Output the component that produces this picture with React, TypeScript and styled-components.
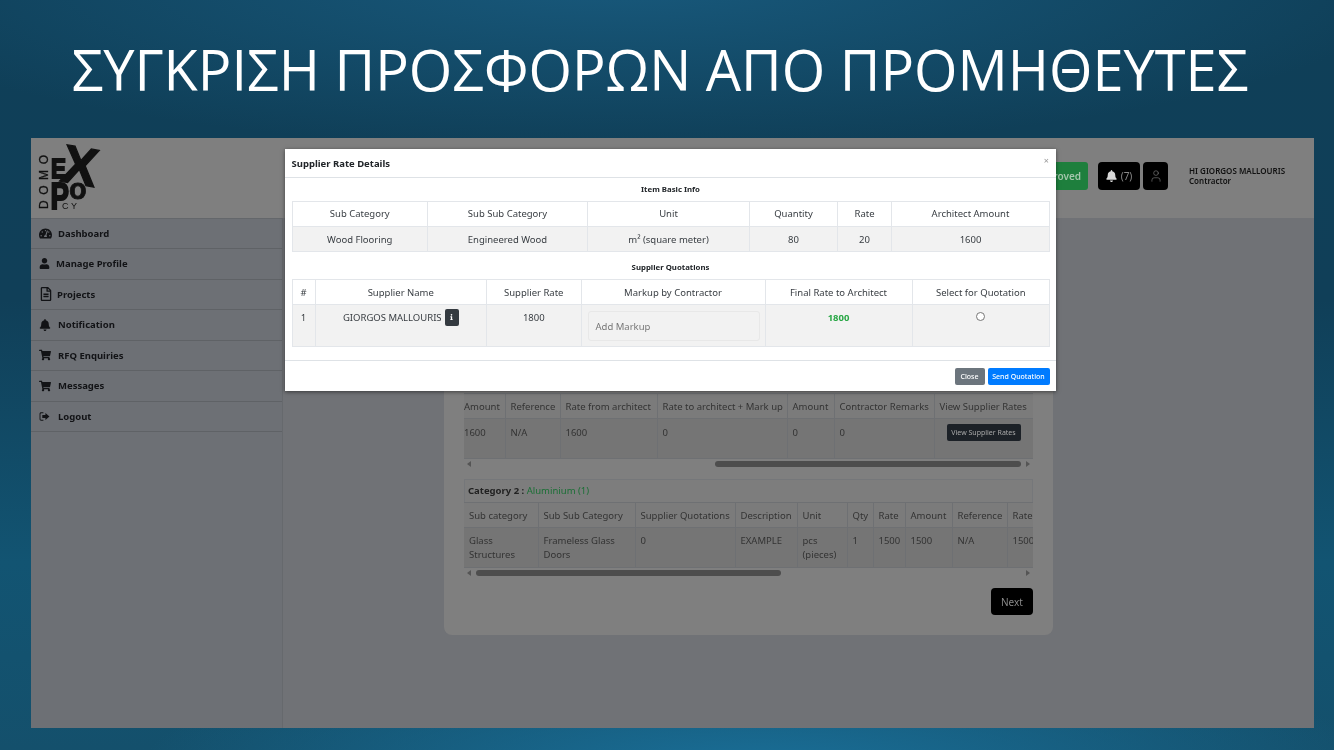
import React from "react";
import styled, { createGlobalStyle } from "styled-components";
import { FaTachometerAlt, FaUser, FaRegFileAlt, FaBell, FaShoppingCart, FaInfo } from "react-icons/fa";
import { User } from "lucide-react";

const Global = createGlobalStyle`
  html, body { margin: 0; padding: 0; width: 1334px; height: 750px; overflow: hidden; }
  body { font-family: "Noto Sans", "Open Sans", sans-serif; }
  * { box-sizing: border-box; }
`;

const Slide = styled.div`
  width: 1334px; height: 750px; overflow: hidden; display: flex; flex-direction: column;
  background:
    radial-gradient(ellipse 620px 130px at 760px 770px, #1a6f98 0%, rgba(26,111,152,0) 100%),
    radial-gradient(ellipse 800px 170px at 620px -20px, #18597c 0%, rgba(24,89,124,0) 100%),
    linear-gradient(180deg, #0f3f58 0%, #103f58 40%, #125472 75%, #14506c 100%);
`;
const TitleBar = styled.div`
  height: 138px; flex: none; display: flex; justify-content: center; padding: 31px 14px 0 0;
`;
const Title = styled.h1`
  margin: 0; color: #fff; font-weight: 400; font-size: 55.9px; line-height: 76px; white-space: nowrap;
  font-family: "Open Sans", "Noto Sans", sans-serif;
`;
const Window = styled.div`
  position: relative; width: 1283px; height: 590px; margin-left: 31px; overflow: hidden;
  display: flex; flex-direction: column; background: #707276; filter: blur(0.3px);
`;
const Header = styled.header`
  height: 80px; flex: none; background: #7f7f7f; display: flex; align-items: center; padding: 5px 0 0 5px;
`;
const LogoBox = styled.div` width: 70px; height: 72px; `;
const HeaderRight = styled.div`
  margin-left: auto; display: flex; align-items: center; padding-right: 8px; margin-top: -9px;
`;
const Approved = styled.div`
  width: 80px; height: 28px; background: #1e7f3d; border-radius: 3px; color: #a4c6ac; font-size: 10px;
  font-weight: 600; display: flex; align-items: center; justify-content: flex-end; padding-right: 7px;
`;
const DarkBtn = styled.div<{ $w: number; $ml: number }>`
  width: ${p => p.$w}px; margin-left: ${p => p.$ml}px; height: 28px; border-radius: 4px; background: #000; color: #8a8a8a;
  font-size: 10px; display: flex; align-items: center; justify-content: center; gap: 4px;
  & > svg.bell { color: #d8d8d8; width: 11px; height: 12px; }
`;
const Greeting = styled.div`
  margin-left: 21px; width: 117px; font-size: 8px; line-height: 10px; font-weight: 600; color: #111;
`;
const Upper = styled.div` text-transform: uppercase; white-space: nowrap; `;
const Body = styled.div` flex: 1; display: flex; min-height: 0; `;
const Sidebar = styled.nav`
  width: 252px; flex: none; background: #6d7075; border-right: 1px solid #66696d; padding-top: 0.5px; box-shadow: inset 0 1px 0 #64676b;
`;
const NavItem = styled.div<{ $gap: number; $size: number }>`
  height: 30.5px; display: flex; align-items: center; padding-left: 8px; gap: ${p => p.$gap}px;
  border-bottom: 1px solid #5f6266; font-size: 9.5px; font-weight: 700; color: #121316;
  & > svg { width: ${p => p.$size}px; height: ${p => p.$size}px; flex: none; }
`;
const Main = styled.main` flex: 1; padding: 0 0 0 161px; min-width: 0; `;
const Card = styled.section`
  width: 609px; height: 417px; background: #7f7f7f; border-radius: 0 0 8px 8px; padding: 175px 20px 0;
`;
const Scroller = styled.div` overflow: hidden; width: 569px; `;
const DimTable = styled.table<{ $w: number; $thH: number; $tdH: number; $pt: number; $flush?: boolean }>`
  border-collapse: collapse; table-layout: fixed; width: ${p => p.$w}px; font-size: 9.5px; color: #333;
  th, td { border: 1px solid #6e7073; text-align: left; font-weight: 400; padding: 0 0 0 5px; vertical-align: top; }
  th { height: ${p => p.$thH}px; vertical-align: middle; white-space: nowrap; overflow: hidden; background: #7b7b7b; }
  td { height: ${p => p.$tdH}px; line-height: 14px; padding-top: ${p => p.$pt}px; background: #757575; overflow: hidden; white-space: normal; }
  tr > *:first-child { border-left: none; ${p => p.$flush ? "padding-left: 0;" : ""} }
  tr > *:last-child { border-right: none; }
`;
const Col = styled.col<{ $w: number }>` width: ${p => p.$w}px; `;
const ViewBtn = styled.span`
  display: block; width: 74px; height: 17px; margin: -2px 0 0 7px; background: #1c2127; border-radius: 2px;
  color: #a8a8a8; font-size: 7px; line-height: 17px; text-align: center; white-space: nowrap;
`;
const ScrollBar = styled.div`
  height: 10px; display: flex; align-items: center; width: 569px; position: relative;
`;
const Arrow = styled.i<{ $right?: boolean }>`
  width: 0; height: 0; border-top: 3px solid transparent; border-bottom: 3px solid transparent;
  ${p => p.$right ? "border-left: 4px solid #555; margin-left: auto; margin-right: 3px;" : "border-right: 4px solid #555; margin-left: 3px;"}
`;
const Thumb = styled.span<{ $l: number; $w: number }>`
  position: absolute; left: ${p => p.$l}px; width: ${p => p.$w}px; height: 6px; border-radius: 3px; background: #4d4d4d;
`;
const CatHead = styled.div`
  margin-top: 10px; height: 23px; width: 569px; border: 1px solid #75777a; border-bottom: none; padding-left: 3px;
  font-size: 9.5px; line-height: 22px; color: #333; font-weight: 400; background: #7d7d7d;
`;
const Strong = styled.b` font-weight: 700; color: #222; `;
const Green = styled.span` color: #1a6f35; `;
const NextRow = styled.div` display: flex; justify-content: flex-end; margin-top: 10px; `;
const NextBtn = styled.div`
  width: 42px; height: 27px; background: #000; color: #8a8a8a; font-size: 10px; border-radius: 4px;
  display: flex; align-items: center; justify-content: center;
`;
const Overlay = styled.div` position: absolute; inset: 0; `;
const Modal = styled.div`
  position: absolute; left: 254px; top: 11px; width: 771px; height: 242px; background: #fff;
  box-shadow: 0 1px 4px rgba(0,0,0,.5); display: flex; flex-direction: column; color: #212529;
`;
const ModalHead = styled.div`
  height: 29px; flex: none; border-bottom: 1px solid #dee2e6; display: flex; align-items: center; justify-content: space-between;
  padding: 0 7px 0 6.5px; font-size: 9.5px; font-weight: 700;
`;
const CloseX = styled.span` color: #999; font-size: 9px; margin-top: -5px; font-weight: 400; `;
const ModalBody = styled.div` flex: none; height: 183px; padding: 0 6.5px; border-bottom: 1px solid #dee2e6; `;
const Caption = styled.div<{ $h: number; $pt: number }>`
  height: ${p => p.$h}px; padding-top: ${p => p.$pt}px; display: flex; align-items: center; justify-content: center; font-size: 7.8px; font-weight: 700; color: #212529;
`;
const RateTable = styled.table`
  width: 757.5px; border-collapse: collapse; table-layout: fixed; font-size: 9.5px; color: #383d42;
  th, td { border: 1px solid #e3e6ea; text-align: center; font-weight: 400; padding: 0; }
  th { height: 25px; }
  td { background: #f2f2f2; }
`;
const BasicCell = styled.td` height: 25px; padding-top: 1px !important; `;
const TallCell = styled.td` height: 42px; vertical-align: top; padding-top: 6px !important; line-height: 13px; `;
const InputCell = styled.td` vertical-align: top; padding: 6px 5px 0 6px !important; `;
const FakeInput = styled.div`
  height: 30px; background: #f2f2f2; border: 1px solid #e8e8e8; border-radius: 3px; color: #777; text-align: left;
  padding-left: 7px; line-height: 29px;
`;
const RateGreen = styled.b` color: #28a745; font-weight: 700; `;
const Radio = styled.span`
  display: inline-block; width: 9px; height: 9px; margin-top: 1px; border: 1px solid #777; background: #fff; border-radius: 50%;
`;
const InfoBtn = styled.span`
  display: inline-flex; width: 14px; height: 17px; margin: -4px 0 -2px 3px; vertical-align: middle; background: #343a40; border-radius: 2px;
  color: #fff; align-items: center; justify-content: center;
  & > svg { width: 5px; height: 6px; }
`;
const ModalFoot = styled.div` flex: 1; display: flex; align-items: center; justify-content: flex-end; gap: 3px; padding: 0 6.5px; `;
const FootBtn = styled.div<{ $w: number; $bg: string }>`
  width: ${p => p.$w}px; height: 17px; border-radius: 2px; background: ${p => p.$bg}; color: #fff; font-size: 7px; line-height: 17px; text-align: center;
  font-weight: 500; white-space: nowrap;
`;

const LogoutIcon = () => (
  <svg viewBox="0 0 12 12" fill="currentColor">
    <path d="M4.8 1.4H2.4C1.3 1.4.6 2.1.6 3.2v5.6c0 1.1.7 1.8 1.8 1.8h2.4V9.6H2.6c-.6 0-1-.3-1-1V3.4c0-.7.4-1 1-1h2.2z" />
    <path d="M7 2.3 11.4 6 7 9.7V7.7H3.6V4.3H7z" />
  </svg>
);

const LogoSvg = styled.svg` overflow: visible; display: block; `;

const Logo = () => (
  <LogoSvg viewBox="36 144 70 72" width="70" height="72" fill="#111" fontFamily="Liberation Sans">
    <text transform="translate(48 208) rotate(-90)" fontSize="12" textLength="54" lengthAdjust="spacing" stroke="#111" strokeWidth=".3">DOMO</text>
    <text x="0" y="0" fontWeight="700" fontSize="54" stroke="#111" strokeWidth="1.2" transform="translate(59 180) rotate(10)">X</text>
    <text x="51" y="177" fontWeight="700" fontSize="28" stroke="#111" strokeWidth="2" textLength="15" lengthAdjust="spacingAndGlyphs">E</text>
    <text x="50.5" y="208" fontWeight="700" fontSize="36" stroke="#111" strokeWidth="2" textLength="18.5" lengthAdjust="spacingAndGlyphs">P</text>
    <text x="69" y="198" fontWeight="700" fontSize="29" stroke="#111" strokeWidth=".8">o</text>
    <text x="62" y="208" fontSize="9" letterSpacing="2.5">CY</text>
  </LogoSvg>
);

const nav = [
  { icon: <FaTachometerAlt />, label: "Dashboard", gap: 6, size: 13 },
  { icon: <FaUser />, label: "Manage Profile", gap: 6, size: 11 },
  { icon: <FaRegFileAlt />, label: "Projects", gap: 4, size: 14 },
  { icon: <FaBell />, label: "Notification", gap: 7, size: 12 },
  { icon: <FaShoppingCart />, label: "RFQ Enquiries", gap: 7, size: 12 },
  { icon: <FaShoppingCart />, label: "Messages", gap: 7, size: 12 },
  { icon: <LogoutIcon />, label: "Logout", gap: 8, size: 11 },
];

export default function App() {
  return (
    <Slide>
      <Global />
      <TitleBar><Title>ΣΥΓΚΡΙΣΗ ΠΡΟΣΦΟΡΩΝ ΑΠΟ ΠΡΟΜΗΘΕΥΤΕΣ</Title></TitleBar>
      <Window>
        <Header>
          <LogoBox><Logo /></LogoBox>
          <HeaderRight>
            <Approved>Approved</Approved>
            <DarkBtn $w={42} $ml={10}><FaBell className="bell" />(7)</DarkBtn>
            <DarkBtn $w={25} $ml={3}><User size={14} strokeWidth={1} /></DarkBtn>
            <Greeting><Upper>Hi GIORGOS MALLOURIS</Upper>Contractor</Greeting>
          </HeaderRight>
        </Header>
        <Body>
          <Sidebar>
            {nav.map(n => <NavItem key={n.label} $gap={n.gap} $size={n.size}>{n.icon}{n.label}</NavItem>)}
          </Sidebar>
          <Main>
            <Card>
              <Scroller>
                <DimTable $w={569} $thH={25} $tdH={40} $pt={7} $flush>
                  <colgroup>{[41, 55, 97, 130, 47, 100, 99].map((w, i) => <Col key={i} $w={w} />)}</colgroup>
                  <thead><tr><th>Amount</th><th>Reference</th><th>Rate from architect</th><th>Rate to architect + Mark up</th><th>Amount</th><th>Contractor Remarks</th><th>View Supplier Rates</th></tr></thead>
                  <tbody><tr><td>1600</td><td>N/A</td><td>1600</td><td>0</td><td>0</td><td>0</td><td><ViewBtn>View Supplier Rates</ViewBtn></td></tr></tbody>
                </DimTable>
              </Scroller>
              <ScrollBar><Arrow /><Thumb $l={251} $w={306} /><Arrow $right /></ScrollBar>
              <CatHead><Strong>Category 2 : </Strong><Green>Aluminium (1)</Green></CatHead>
              <Scroller>
                <DimTable $w={610} $thH={25} $tdH={40} $pt={6}>
                  <colgroup>{[74, 97, 100, 62, 50, 26, 32, 47, 55, 67].map((w, i) => <Col key={i} $w={w} />)}</colgroup>
                  <thead><tr><th>Sub category</th><th>Sub Sub Category</th><th>Supplier Quotations</th><th>Description</th><th>Unit</th><th>Qty</th><th>Rate</th><th>Amount</th><th>Reference</th><th>Rate</th></tr></thead>
                  <tbody><tr><td>Glass Structures</td><td>Frameless Glass Doors</td><td>0</td><td>EXAMPLE</td><td>pcs (pieces)</td><td>1</td><td>1500</td><td>1500</td><td>N/A</td><td>1500</td></tr></tbody>
                </DimTable>
              </Scroller>
              <ScrollBar><Arrow /><Thumb $l={12} $w={305} /><Arrow $right /></ScrollBar>
              <NextRow><NextBtn>Next</NextBtn></NextRow>
            </Card>
          </Main>
        </Body>
        <Overlay>
          <Modal>
            <ModalHead>Supplier Rate Details<CloseX>×</CloseX></ModalHead>
            <ModalBody>
              <Caption $h={22.5} $pt={0}>Item Basic Info</Caption>
              <RateTable>
                <colgroup>{[135.5, 160, 162, 88, 54, 158].map((w, i) => <Col key={i} $w={w} />)}</colgroup>
                <thead><tr><th>Sub Category</th><th>Sub Sub Category</th><th>Unit</th><th>Quantity</th><th>Rate</th><th>Architect Amount</th></tr></thead>
                <tbody><tr><BasicCell>Wood Flooring</BasicCell><BasicCell>Engineered Wood</BasicCell><BasicCell>m² (square meter)</BasicCell><BasicCell>80</BasicCell><BasicCell>20</BasicCell><BasicCell>1600</BasicCell></tr></tbody>
              </RateTable>
              <Caption $h={27.5} $pt={4}>Supplier Quotations</Caption>
              <RateTable>
                <colgroup>{[23, 171.5, 94.5, 184, 147, 137.5].map((w, i) => <Col key={i} $w={w} />)}</colgroup>
                <thead><tr><th>#</th><th>Supplier Name</th><th>Supplier Rate</th><th>Markup by Contractor</th><th>Final Rate to Architect</th><th>Select for Quotation</th></tr></thead>
                <tbody><tr>
                  <TallCell>1</TallCell>
                  <TallCell>GIORGOS MALLOURIS<InfoBtn><FaInfo /></InfoBtn></TallCell>
                  <TallCell>1800</TallCell>
                  <InputCell><FakeInput>Add Markup</FakeInput></InputCell>
                  <TallCell><RateGreen>1800</RateGreen></TallCell>
                  <TallCell><Radio /></TallCell>
                </tr></tbody>
              </RateTable>
            </ModalBody>
            <ModalFoot>
              <FootBtn $w={30} $bg="#6c757d">Close</FootBtn>
              <FootBtn $w={62} $bg="#007bff">Send Quotation</FootBtn>
            </ModalFoot>
          </Modal>
        </Overlay>
      </Window>
    </Slide>
  );
}
